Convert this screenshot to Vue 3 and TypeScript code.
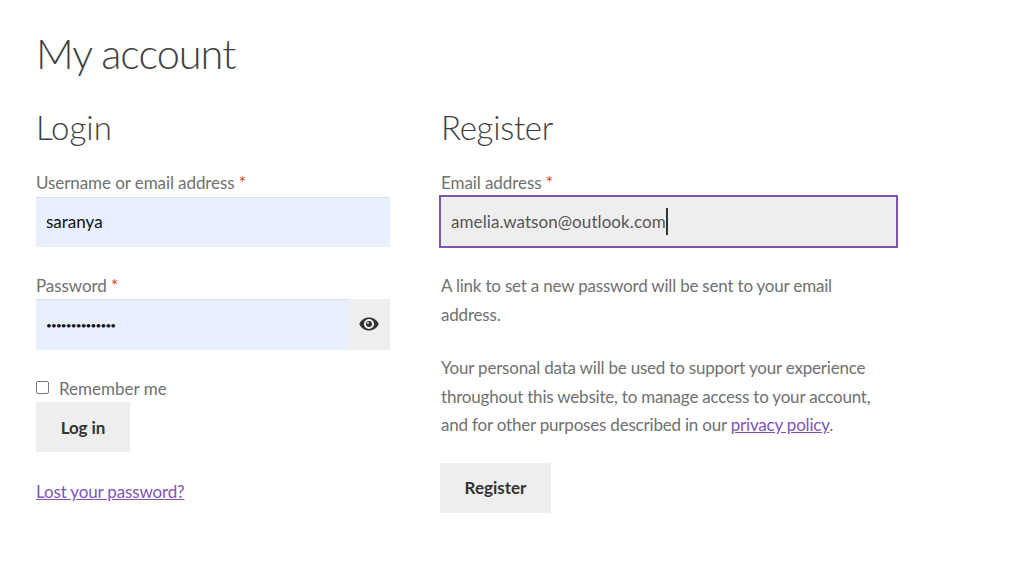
<script setup lang="ts">
import { ref } from 'vue'
const username = ref('saranya')
const password = ref('••••••••••••••')
const email = ref('amelia.watson@outlook.com')
</script>

<template>
  <main class="page">
    <h1 class="title">My account</h1>
    <div class="columns">
      <section class="login">
        <h2 class="heading">Login</h2>
        <label class="label">Username or email address <span class="req">*</span></label>
        <div class="field filled">{{ username }}</div>

        <label class="label second">Password <span class="req">*</span></label>
        <div class="pass-row">
          <div class="field filled dots">{{ password }}</div>
          <button class="eye" type="button" aria-label="Show password">
            <svg width="20" height="14" viewBox="0 0 20 14">
              <path fill="#333" fill-rule="evenodd" d="M10 0.5C5.6 0.5 1.9 3.1 0.3 7c1.6 3.9 5.3 6.5 9.7 6.5s8.100-2.600 9.700-6.500C18.100 3.100 14.400 0.500 10 0.500zM10 11.900C7.200 11.900 5 9.700 5 7s2.200-4.900 5-4.900 5 2.200 5 4.900-2.200 4.900-5 4.900z"/>
              <circle cx="10" cy="7" r="3" fill="#333"/>
              <circle cx="9" cy="6" r="0.9" fill="#eee"/>
            </svg>
          </button>
        </div>

        <label class="remember"><span class="box"></span><span>Remember me</span></label>
        <button class="btn login-btn" type="button">Log in</button>
        <p class="lost"><a href="#" class="link">Lost your password?</a></p>
      </section>

      <section class="register">
        <h2 class="heading reg-heading">Register</h2>
        <label class="label email-label">Email address <span class="req">*</span></label>
        <div class="field focused"><span class="caret-text">{{ email }}</span></div>
        <p class="para first">A link to set a new password will be sent to your email address.</p>
        <p class="para">Your personal data will be used to support your experience throughout this website, to manage access to your account, and for other purposes described in our <a href="#" class="link">privacy policy</a>.</p>
        <button class="btn reg-btn" type="button">Register</button>
      </section>
    </div>
  </main>
</template>

<style>
html, body { margin: 0; background: #fff; }
</style>

<style scoped>
.page {
  box-sizing: border-box;
  width: 1024px;
  height: 573px;
  padding: 28px 0 0 36px;
  overflow: hidden;
  font-family: "Lato", "Open Sans", sans-serif;
  font-size: 17px;
  line-height: 28.5px;
  color: #707070;
}
.title {
  margin: 0;
  font-size: 41.5px;
  line-height: 50px;
  font-weight: 300;
  letter-spacing: -1px;
  color: #404040;
}
.columns { display: flex; margin-top: 27px; gap: 50px; }
.login { width: 354px; }
.register { width: 440px; }
.heading {
  margin: 0 0 21px;
  font-size: 33px;
  line-height: 44px;
  font-weight: 300;
  color: #404040;
}
.reg-heading { letter-spacing: -0.3px; }
.label { display: block; height: 27px; line-height: 26px; letter-spacing: -0.08px; }
.second { margin-top: 26px; margin-bottom: -1px; }
.req { color: #e2401c; }
.field {
  box-sizing: border-box;
  height: 50px;
  padding: 0 10px;
  line-height: 48px;
  color: #111;
}
.filled { background: #e8f0fe; border-top: 1px solid #d5dcec; }
.dots { flex: 1; height: 51px; line-height: 50px; font-size: 10px; letter-spacing: -0.85px; }
.pass-row { display: flex; }
.eye {
  width: 42px;
  height: 51px;
  padding: 0 1px 1px 0;
  border: 0;
  background: #eee;
  display: flex;
  align-items: center;
  justify-content: center;
}
.remember {
  display: flex;
  align-items: center;
  gap: 10px;
  height: 28px;
  margin-top: 25px;
}
.box {
  box-sizing: border-box;
  width: 13px;
  height: 13px;
  border: 1px solid #767676;
  border-radius: 2px;
  background: #fff;
  position: relative;
  top: -2px;
}
.btn {
  display: block;
  height: 50px;
  padding: 0;
  border: 0;
  background: #eee;
  color: #333;
  font-family: inherit;
  font-size: 17px;
  font-weight: 700;
}
.login-btn { width: 94px; margin-top: -1px; letter-spacing: -0.08px; }
.lost { margin: 26px 0 0; letter-spacing: -0.16px; }
.link { color: #7f54b3; text-decoration: underline; }
.register { padding-left: 1px; }
.focused {
  width: 459px;
  height: 53px;
  margin: -2px 0 0 -2px;
  border: 2px solid #7f54b3;
  background: #eee;
  color: #555;
  padding: 0 10px;
  line-height: 49px;
  letter-spacing: 0.08px;
}
.caret-text { border-right: 2px solid #333; padding: 3px 0; }
.para { margin: 0 0 25px; width: 440px; letter-spacing: -0.2px; }
.first { margin-top: 24px; }
.reg-btn { width: 111px; margin-left: -1px; margin-top: -2px; }
</style>
